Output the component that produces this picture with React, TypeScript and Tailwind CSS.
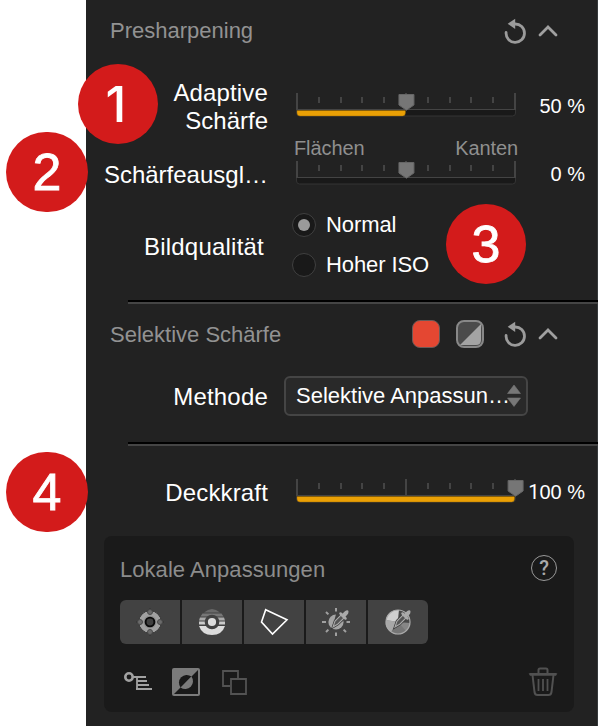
import React from "react";

function Slider({ value, fill }: { value: number; fill: boolean }) {
  const x = 9.3 + value * 2.183;
  return (
    <svg width="240" height="28" viewBox="0 0 240 28" className="block shrink-0">
      {Array.from({ length: 11 }, (_, i) => {
        const tall = i % 5 === 0;
        return (
          <rect key={i} x={Math.round(8 + i * 21.8)} y={tall ? 2 : 6} width="2" height={tall ? 17 : 6} fill="#444444" />
        );
      })}
      <path d="M8.5 18.5H227.5V22Q227.5 25 224.5 25H11.5Q8.5 25 8.5 22Z" fill="#191919" stroke="#343434" />
      <path d="M8 18.5H228" stroke="#444444" />
      {fill && (
        <path d={`M9 19.5H${x - 1}V21.5Q${x - 1} 25 ${x - 4} 25H12Q9 25 9 22Z`} fill="#eaa005" stroke="#8d6308" strokeWidth=".4" />
      )}
      <path d={`M${x - 7.5} 3.5H${x + 7.5}V14L${x} 19.2L${x - 7.5} 14Z`} fill="#767676" stroke="#666666" />
    </svg>
  );
}

function Reset() {
  return (
    <svg width="24" height="28" viewBox="0 0 24 28" className="block">
      <path d="M3.1 15.5A9.2 9.2 0 1 0 12 7" fill="none" stroke="#9b9b9b" strokeWidth="2.8" strokeLinecap="round" />
      <path d="M4.7 6.8L12.2 1.8V12Z" fill="#9b9b9b" />
    </svg>
  );
}

function Chevron() {
  return (
    <svg width="22" height="16" viewBox="0 0 22 16" className="block">
      <path d="M3 12L11 4L19 12" fill="none" stroke="#a0a0a0" strokeWidth="2.8" strokeLinecap="round" />
    </svg>
  );
}

function Radio({ label, on }: { label: string; on?: boolean }) {
  return (
    <div className="flex h-10 items-center gap-[10px]">
      <span className="flex size-6 items-center justify-center rounded-full border-[1.5px] border-[#404040] bg-[#191919]">
        {on && <span className="size-3 rounded-full bg-[#9a9a9a]" />}
      </span>
      <span className="text-[22px] leading-[26px] tracking-[-0.1px]">{label}</span>
    </div>
  );
}

function Divider() {
  return <div className="-mr-px ml-[42px] h-1 shrink-0 border-b-2 border-[#454545] bg-black" />;
}

function Badge({ n, place }: { n: number; place: string }) {
  return (
    <div className={`absolute flex h-20 items-center justify-center rounded-full bg-[#d31b1b] text-white ${place}`}>
      {n === 1 ? (
        <span className="-ml-1 font-[Inter] text-[50px] leading-[52px] font-medium">{n}</span>
      ) : (
        <span className="text-[52px] leading-[52px] [-webkit-text-stroke:0.8px_white]">{n}</span>
      )}
    </div>
  );
}

function Dropper() {
  return (
    <>
      <path d="M27 27L29 21L35 15L38 18L32 24Z" fill="#686868" stroke="#353535" strokeWidth="2.4" />
      <path d="M27 27L29 21L35 15L38 18L32 24Z" fill="#555" stroke="#a9a9a9" strokeWidth="1.1" />
      <path d="M34.5 13.5L39.5 18.5M37 15L40 12Q42 10.5 41 13L38.5 16" stroke="#aaaaaa" strokeWidth="2.5" strokeLinecap="round" fill="#aaaaaa" />
    </>
  );
}

const icons = [
  <>
    <path d="M30 8L34 12L40 18L44 22L40 26L34 32L30 36L26 32L20 26L16 22L20 18L26 12Z" fill="#303030" />
    <circle cx="30" cy="22" r="11.3" fill="#a1a1a1" stroke="#353535" strokeWidth="1" />
    {[[30, 12], [40, 22], [30, 32], [20, 22]].map(([x, y]) => (
      <circle key={`${x}-${y}`} cx={x} cy={y} r="2.5" fill="#6b6b6b" stroke="#4a4a4a" strokeWidth="1" />
    ))}
    <circle cx="30" cy="22" r="6.5" fill="#8d8d8d" />
    <circle cx="30" cy="22" r="4.4" fill="#404040" stroke="#090909" strokeWidth="1.9" />
  </>,
  <>
    <path d="M22 12.5Q30 5.5 38 12.5Z" fill="#696969" />
    <path d="M20.5 13.5H39.5L41.5 16.5H18.5Z" fill="#777777" />
    <path d="M18 17.5H42L43 20.5H17Z" fill="#aaaaaa" />
    <path d="M17 21.5H43V24.5H17Z" fill="#cacaca" />
    <path d="M17 26H43Q40 35 30 35Q20 35 17 26Z" fill="#dcdcdc" />
    <circle cx="30" cy="22" r="5.7" fill="#dddddd" stroke="#414141" strokeWidth="3.2" />
  </>,
  <path d="M21.7 9.7L43 19.8L28.5 34L17.5 22Z" fill="none" stroke="#ffffff" strokeWidth="1.6" />,
  <>
    <path d="M30 8V11.5M30 32.5V36M16 22H20M40.5 22H44M20 12L22.4 14.4M37.6 29.6L40 32M20 32L22.4 29.6" stroke="#a0a0a0" strokeWidth="2" />
    <circle cx="30" cy="22" r="7.6" fill="#a5a5a5" />
    <path d="M30 14L40 13L37 21L31 25L28 22Z" fill="#424242" />
    <Dropper />
  </>,
  <>
    <circle cx="30" cy="22" r="12" fill="#868686" />
    <path d="M30 22L18 20A12 12 0 0 1 31 10Z" fill="#d0d0d0" />
    <path d="M30 22L23 32A12 12 0 0 1 18 20Z" fill="#a8a8a8" />
    <path d="M30 22L23 32A12 12 0 0 0 38 31Z" fill="#767676" />
    <path d="M30 22L31 10A12 12 0 0 1 42 23Z" fill="#484848" />
    <circle cx="30" cy="22" r="12" fill="none" stroke="#aaaaaa" strokeWidth="1.2" />
    <Dropper />
  </>,
];

export default function App() {
  return (
    <div className="relative h-[726px] w-[598px] overflow-hidden bg-white pl-[86px] font-['Liberation_Sans',Arial,sans-serif] text-white">
      <main className="flex h-full w-[512px] flex-col border-r border-[#363a3c] bg-[#222222]">
        <header className="flex h-[62px] shrink-0 items-center pb-px pl-6 text-[22px] text-[#929292]">
          <h2 className="w-[393px]">Presharpening</h2>
          <Reset />
          <div className="pl-[10px]"><Chevron /></div>
        </header>
        <section className="h-[238px] shrink-0">
          <div className="flex h-[74px]">
            <p className="w-[182px] pt-[17px] text-right text-2xl leading-7"><span className="tracking-[0.15px]">Adaptive</span><br />Schärfe</p>
            <div className="pt-[29px] pl-5"><Slider value={50} fill /></div>
            <span className="-ml-10 w-[97px] pt-[31px] text-right text-xl leading-[26px]">50 %</span>
          </div>
          <div className="flex h-[68px]">
            <p className="w-[182px] pt-[25px] text-right text-2xl leading-7 whitespace-nowrap">Schärfeausgl…</p>
            <div className="ml-5 w-[240px]">
              <div className="flex h-[23px] items-center justify-between pr-[10px] pl-[6px] text-xl leading-6 tracking-[-0.1px] text-[#8f8f8f]">
                <span>Flächen</span><span>Kanten</span>
              </div>
              <Slider value={50} fill={false} />
            </div>
            <span className="-ml-10 w-[97px] pt-[25px] text-right text-xl leading-[26px]">0 %</span>
          </div>
          <div className="flex h-[84px] pt-px">
            <p className="w-[178px] pt-7 text-right text-2xl leading-7 tracking-[0.22px]">Bildqualität</p>
            <div className="ml-7"><Radio label="Normal" on /><Radio label="Hoher ISO" /></div>
          </div>
        </section>
        <Divider />
        <header className="flex h-[62px] shrink-0 items-center pb-[2px] pl-6 text-[22px] text-[#929292]">
          <h2 className="w-[302px]">Selektive Schärfe</h2>
          <span className="size-7 rounded-lg border border-[#6a5a58] bg-[#e44732]" />
          <svg width="28" height="28" viewBox="0 0 28 28" className="ml-4">
            <rect x="1" y="1" width="26" height="26" rx="7" fill="#4b4b4b" />
            <path d="M4 25L25 4V20Q25 25 20 25Z" fill="#a4a4a4" />
            <rect x="1" y="1" width="26" height="26" rx="7" fill="none" stroke="#888888" strokeWidth="2" />
          </svg>
          <div className="ml-[19px]"><Reset /></div>
          <div className="pl-[10px]"><Chevron /></div>
        </header>
        <div className="flex h-[76px] shrink-0 pt-[10px]">
          <label className="w-[182px] pt-[7px] text-right text-2xl leading-7 tracking-[0.2px]">Methode</label>
          <div className="ml-4 flex h-10 w-[244px] items-center rounded-md border-2 border-[#454545] bg-[#292929] pl-[10px] text-[22px]">
            <span className="w-[211px] shrink-0 pb-px whitespace-nowrap">Selektive Anpassun…</span>
            <svg width="14" height="24" viewBox="0 0 14 24" className="shrink-0">
              <path d="M.5 9.5L7 1L13.5 9.5ZM.5 14H13.5L7 22.5Z" fill="#777777" stroke="#777777" strokeWidth=".6" strokeLinejoin="round" />
            </svg>
          </div>
        </div>
        <Divider />
        <div className="flex h-[90px] shrink-0">
          <p className="w-[182px] pt-[33px] text-right text-2xl leading-7 tracking-[0.15px]">Deckkraft</p>
          <div className="pt-[31px] pl-5"><Slider value={100} fill /></div>
          <span className="-ml-10 w-[97px] pt-[33px] text-right text-xl leading-[26px]"><span className="font-[Roboto]">1</span>00 %</span>
        </div>
        <section className="ml-[18px] h-[176px] w-[470px] shrink-0 rounded-lg bg-[#1a1a1a] px-4">
          <div className="flex h-16 items-center justify-between text-[22px] text-[#8c8c8c]">
            <h3 className="pt-[2px] tracking-[0.05px]">Lokale Anpassungen</h3>
            <span className="mr-px flex size-[26px] items-center justify-center rounded-full border-[1.3px] border-[#999999] font-[Roboto] text-[20px] leading-5 font-medium text-[#aaaaaa]">?</span>
          </div>
          <div className="flex gap-[2px]">
            {icons.map((icon, i) => (
              <button key={i} className="h-11 w-[60px] bg-[#424242] first:rounded-l-md last:rounded-r-md">
                <svg width="60" height="44" viewBox="0 0 60 44">{icon}</svg>
              </button>
            ))}
          </div>
          <div className="flex h-[68px] items-center pt-2">
            <svg width="32" height="28" viewBox="0 0 32 28" className="ml-[2px]" fill="none" stroke="#a2a2a2">
              <circle cx="7" cy="9" r="3.7" strokeWidth="2.6" />
              <path d="M11 9H24M15 8V22M15 13H25M15 17H27M14 21H30" strokeWidth="1.8" />
            </svg>
            <svg width="28" height="28" viewBox="0 0 28 28" className="ml-[18px]">
              <rect width="28" height="28" rx="2" fill="#7b7b7b" />
              <path d="M26 2V26H2Z" fill="#191919" />
              <path d="M8.6 19.4A7.7 7.7 0 0 1 19.4 8.6Z" fill="#191919" />
              <path d="M8.6 19.4A7.7 7.7 0 0 0 19.4 8.6Z" fill="#7b7b7b" />
            </svg>
            <svg width="26" height="26" viewBox="0 0 26 26" className="ml-[21px]" fill="none" stroke="#535353" strokeWidth="1.8">
              <path d="M17 9V2H2V17H9M10 10H25V25H10Z" />
            </svg>
            <svg width="30" height="30" viewBox="0 0 30 30" className="ml-auto" fill="none" stroke="#515151" strokeWidth="2" strokeLinejoin="round">
              <path d="M2 7H28M10.5 6V3Q10.5 1.5 12 1.5H18Q19.5 1.5 19.5 3V6M4.5 8L6.5 25Q7 28 9.5 28H20.5Q23 28 23.5 25L25.5 8" />
              <path d="M10.5 12V24M15 12V24M19.5 12V24" strokeWidth="1.8" />
              <path d="M1 6.5H29L28 8.5H2Z" fill="#515151" strokeWidth=".5" />
            </svg>
          </div>
        </section>
      </main>
      <Badge n={1} place="left-[78px] top-16 w-20" />
      <Badge n={2} place="left-[6px] top-[132px] w-[82px]" />
      <Badge n={3} place="left-[446px] top-[204px] w-20" />
      <Badge n={4} place="left-[6px] top-[452px] w-[82px]" />
    </div>
  );
}
